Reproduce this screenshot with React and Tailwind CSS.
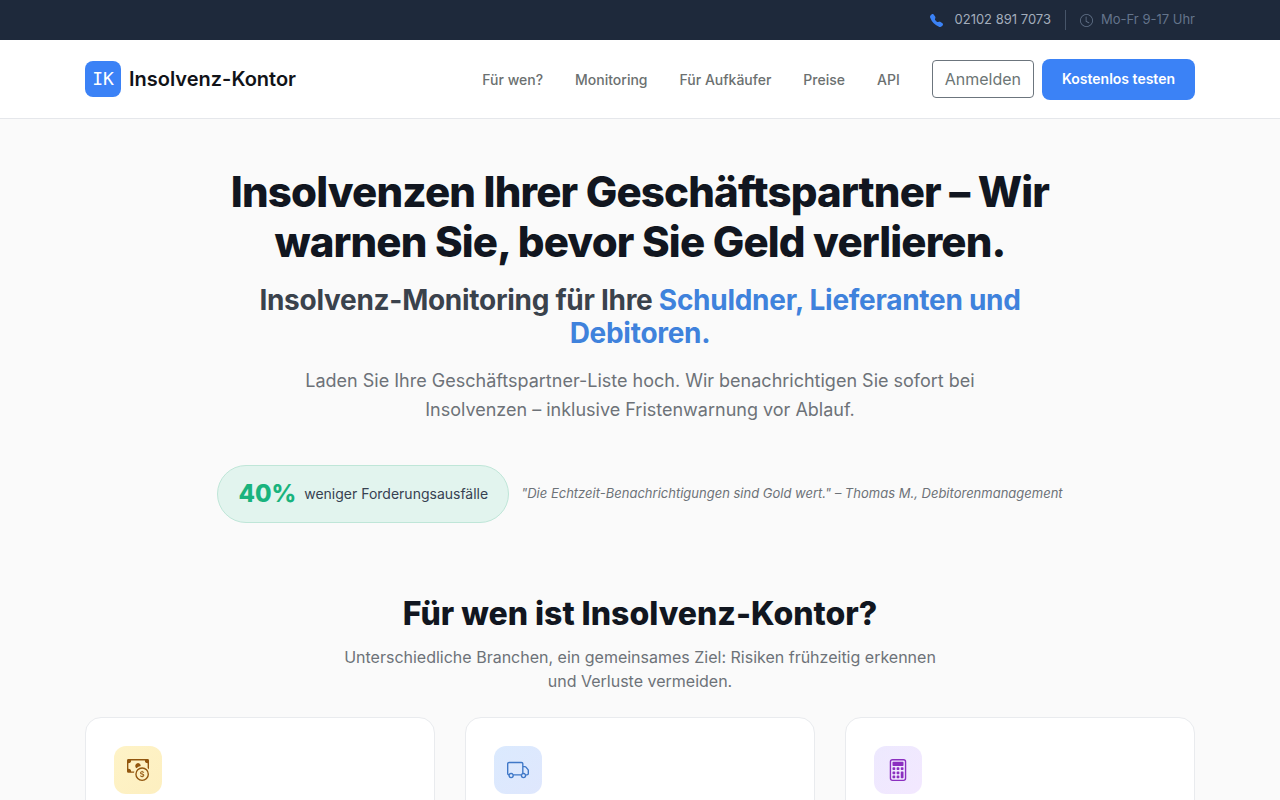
import React from 'react';
import { BsCalculator, BsCashCoin, BsClock, BsTelephoneFill, BsTruck } from 'react-icons/bs';

const navLinks = [
  { label: 'Für wen?', href: '#fuer-wen' },
  { label: 'Monitoring', href: '#monitoring' },
  { label: 'Für Aufkäufer', href: '#aufkaeufer' },
  { label: 'Preise', href: '#preise' },
  { label: 'API', href: '#api' },
];

const audiences = [
  { id: 'inkasso', icon: BsCashCoin, iconClass: 'from-[#fef3c7] to-[#fdefc0] text-[#92560e]' },
  { id: 'lieferanten', icon: BsTruck, iconClass: 'from-[#dbeafe] to-[#dfe7fd] text-[#3f78c8]' },
  { id: 'steuerberater', icon: BsCalculator, iconClass: 'from-[#ede9fe] to-[#f3e8ff] text-[#8b2fc0]' },
];

const TopBar = () => (
  <div className="bg-[#1e293b]">
    <div className="mx-auto flex h-10 max-w-[1140px] items-center justify-end px-[15px] text-[13px]">
      <a href="tel:021028917073" className="flex items-center gap-3 text-[#a3adbb]">
        <BsTelephoneFill className="size-[13px] text-[#3b82f6]" />
        02102 891 7073
      </a>
      <div className="ml-[14px] flex items-center gap-2 border-l border-[#475569] pl-[14px] text-[#64748b]">
        <BsClock className="size-[13px]" />
        Mo-Fr 9-17 Uhr
      </div>
    </div>
  </div>
);

const Header = () => (
  <header className="border-b border-[#e5e7eb] bg-white">
    <div className="mx-auto flex h-[78px] max-w-[1140px] items-center justify-between px-[15px]">
      <a href="#start" className="flex items-center gap-2">
        <span className="flex size-9 items-center justify-center rounded-lg bg-[#3b82f6] font-['DejaVu_Sans_Mono','Liberation_Mono',monospace] text-lg text-white">
          IK
        </span>
        <span className="text-xl font-semibold text-[#111318]">Insolvenz-Kontor</span>
      </a>
      <div className="flex items-center gap-8">
        <nav className="flex items-center gap-8 pt-0.5">
          {navLinks.map((link) => (
            <a key={link.label} href={link.href} className="text-sm font-medium text-[#6b7070]">
              {link.label}
            </a>
          ))}
        </nav>
        <div className="flex items-center gap-2">
          <button type="button" className="h-[38px] rounded border border-[#6c757d] px-3 text-base text-[#6c7575]">
            Anmelden
          </button>
          <button type="button" className="h-[41px] rounded-lg bg-[#3b82f6] px-5 text-sm font-semibold text-white">
            Kostenlos testen
          </button>
        </div>
      </div>
    </div>
  </header>
);

const Hero = () => (
  <section className="mx-auto flex max-w-[880px] flex-col items-center pt-12 text-center">
    <h1 className="text-[42px] leading-[50px] font-extrabold tracking-[-0.02em] text-[#111620]">
      Insolvenzen Ihrer Geschäftspartner – Wir warnen Sie, bevor Sie Geld verlieren.
    </h1>
    <h2 className="mt-[17px] max-w-[800px] text-[28px] leading-[33px] font-bold tracking-[-0.01em] text-[#3a424c]">
      Insolvenz-Monitoring für Ihre <span className="text-[#3f82dc]">Schuldner, Lieferanten und Debitoren.</span>
    </h2>
    <p className="mt-4 max-w-[700px] text-lg leading-[29px] text-[#6d7278]">
      Laden Sie Ihre Geschäftspartner-Liste hoch. Wir benachrichtigen Sie sofort bei Insolvenzen – inklusive
      Fristenwarnung vor Ablauf.
    </p>
    <div className="mt-[41px] flex items-center gap-3">
      <div className="flex h-[58px] items-center gap-2 rounded-full border border-[#bfe6d8] bg-[#e2f4ee] px-5">
        <span className="text-2xl font-extrabold text-[#19b37d]">40%</span>
        <span className="text-sm text-[#374151]">weniger Forderungsausfälle</span>
      </div>
      <p className="text-[13px] text-[#6d7278] italic">
        "Die Echtzeit-Benachrichtigungen sind Gold wert." – Thomas M., Debitorenmanagement
      </p>
    </div>
  </section>
);

const Audiences = () => (
  <section id="fuer-wen" className="mx-auto max-w-[1140px] px-[15px] pt-[72px]">
    <div className="mx-auto max-w-[600px] text-center">
      <h2 className="text-[32px] leading-[38px] font-extrabold text-[#111620]">Für wen ist Insolvenz-Kontor?</h2>
      <p className="mt-3 text-base text-[#6d7278]">
        Unterschiedliche Branchen, ein gemeinsames Ziel: Risiken frühzeitig erkennen und Verluste vermeiden.
      </p>
    </div>
    <div className="mt-6 grid grid-cols-3 gap-[30px]">
      {audiences.map(({ id, icon: Icon, iconClass }) => (
        <article key={id} className="h-80 rounded-2xl border border-[#e9ebee] bg-white p-7">
          <div className={`flex size-12 items-center justify-center rounded-xl bg-linear-to-br ${iconClass}`}>
            <Icon className="size-[22px]" />
          </div>
        </article>
      ))}
    </div>
  </section>
);

const App = () => (
  <div className="h-screen overflow-hidden bg-[#fafafa] font-['Inter','Liberation_Sans',sans-serif]">
    <TopBar />
    <Header />
    <main>
      <Hero />
      <Audiences />
    </main>
  </div>
);

export default App;
